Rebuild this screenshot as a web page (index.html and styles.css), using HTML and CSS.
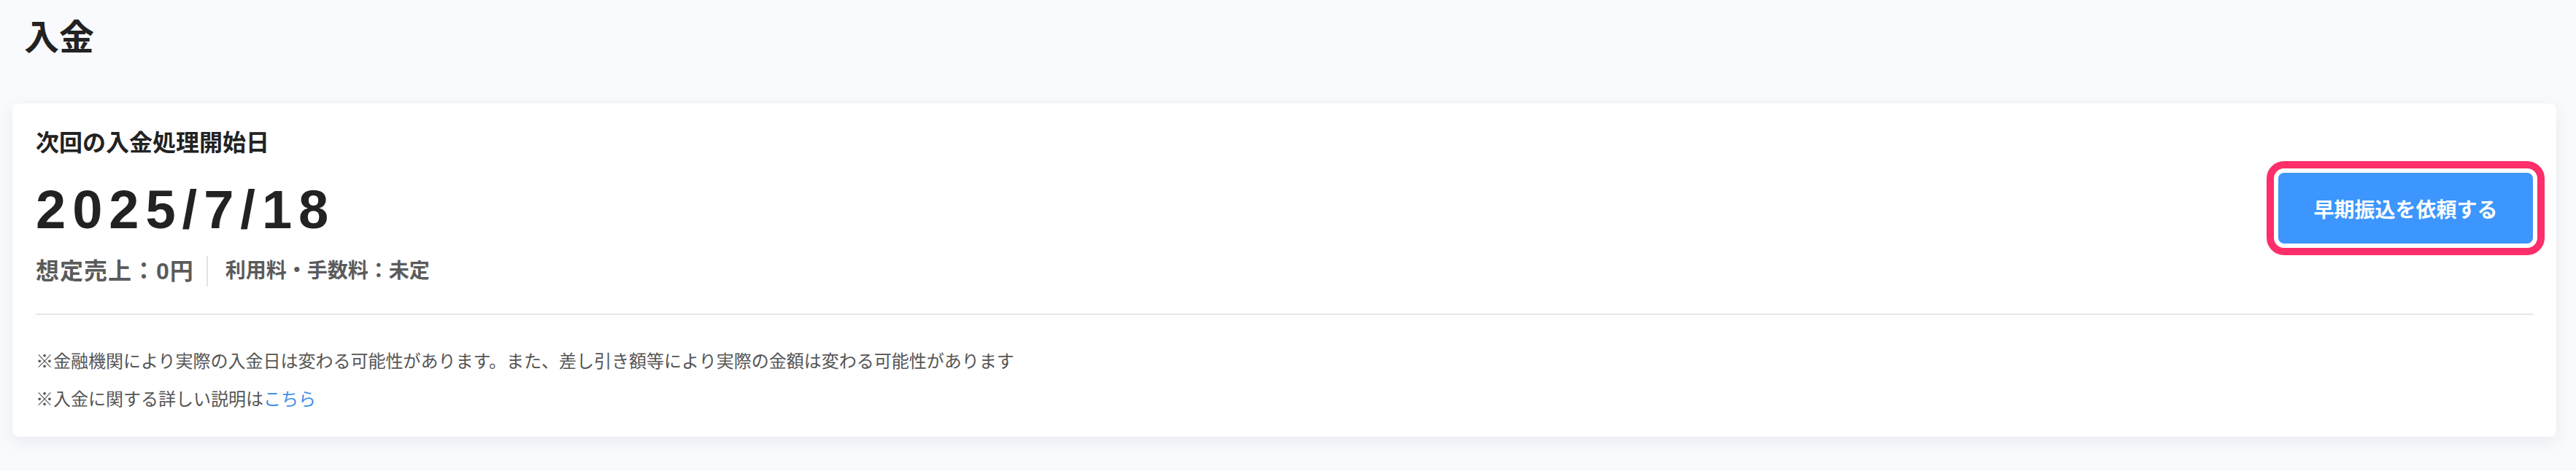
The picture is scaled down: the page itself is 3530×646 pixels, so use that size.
FILE: index.html
```html
<!DOCTYPE html>
<html lang="ja">
<head>
<meta charset="utf-8">
<title>入金</title>
<link rel="stylesheet" href="styles.css">
</head>
<body>
<main class="page">
  <h1 class="page-title">入金</h1>
  <section class="card">
    <div class="card-top">
      <div class="summary">
        <h2 class="summary-label">次回の入金処理開始日</h2>
        <p class="summary-date">2025/7/18</p>
        <div class="summary-meta">
          <span class="meta-item meta-sales">想定売上：0円</span>
          <span class="meta-item meta-sep">利用料・手数料：未定</span>
        </div>
      </div>
      <button class="early-btn" type="button">早期振込を依頼する</button>
    </div>
    <hr class="divider">
    <p class="note note-first">※金融機関により実際の入金日は変わる可能性があります。また、差し引き額等により実際の金額は変わる可能性があります</p>
    <p class="note">※入金に関する詳しい説明は<a class="note-link" href="#">こちら</a></p>
  </section>
</main>
</body>
</html>
```
FILE: styles.css
```css
html, body {
  margin: 0;
  padding: 0;
}

body {
  background: #f9fafd;
  font-family: "Liberation Sans", "Noto Sans CJK JP", sans-serif;
  color: #222222;
}

.page {
  padding: 16px 27px 40px 17px;
}

.page-title {
  margin: 0 0 54px 16px;
  font-size: 48px;
  line-height: 72px;
  font-weight: 700;
  color: #222222;
}

.card {
  background: #ffffff;
  border-radius: 8px;
  box-shadow: 0 6px 22px rgba(40, 50, 90, 0.08);
  padding: 30px 32px 33px;
}

.card-top {
  display: flex;
  align-items: center;
  justify-content: space-between;
  margin-bottom: 37px;
}

.summary-label {
  margin: 0;
  font-size: 32px;
  line-height: 48px;
  font-weight: 700;
  color: #222222;
}

.summary-date {
  margin: 24px 0 0;
  font-size: 74px;
  line-height: 88px;
  font-weight: 700;
  letter-spacing: 9px;
  color: #222222;
}

.summary-meta {
  display: flex;
  align-items: center;
  margin-top: 19px;
  line-height: 42px;
  font-weight: 700;
  color: #5b5b5b;
}

.meta-sales {
  font-size: 32px;
  letter-spacing: 1px;
}

.meta-sep {
  font-size: 28px;
  border-left: 2px solid #e3e3e3;
  margin-left: 17px;
  padding-left: 24px;
}

.early-btn {
  width: 349px;
  height: 97px;
  margin-top: 6px;
  background: #3c96fd;
  color: #ffffff;
  border: none;
  border-radius: 8px;
  font-family: inherit;
  font-size: 28px;
  font-weight: 700;
  outline: 10px solid #fd2e6a;
  outline-offset: 6px;
  cursor: pointer;
}

.divider {
  border: 0;
  height: 2px;
  background: #e6e6e6;
  margin: 0;
}

.note {
  margin: 16px 0 0;
  font-size: 24px;
  line-height: 36px;
  color: #555555;
}

.note-first {
  margin-top: 46px;
}

.note-link {
  color: #3d8fe8;
  text-decoration: none;
}
```
